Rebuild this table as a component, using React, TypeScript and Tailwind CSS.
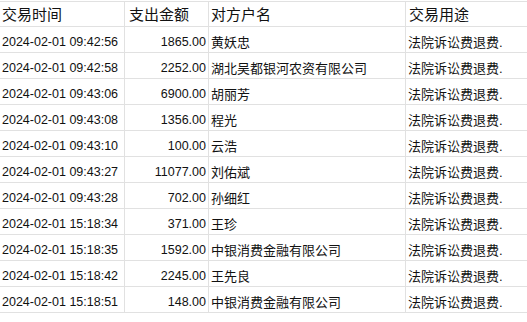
import React from "react";

const rows: [string, string, string][] = [
  ["2024-02-01 09:42:56", "1865.00", "黄妖忠"],
  ["2024-02-01 09:42:58", "2252.00", "湖北吴都银河农资有限公司"],
  ["2024-02-01 09:43:06", "6900.00", "胡丽芳"],
  ["2024-02-01 09:43:08", "1356.00", "程光"],
  ["2024-02-01 09:43:10", "100.00", "云浩"],
  ["2024-02-01 09:43:27", "11077.00", "刘佑斌"],
  ["2024-02-01 09:43:28", "702.00", "孙细红"],
  ["2024-02-01 15:18:34", "371.00", "王珍"],
  ["2024-02-01 15:18:35", "1592.00", "中银消费金融有限公司"],
  ["2024-02-01 15:18:42", "2245.00", "王先良"],
  ["2024-02-01 15:18:51", "148.00", "中银消费金融有限公司"],
];

const font = { fontFamily: '"Liberation Sans", "Noto Sans CJK SC", sans-serif' };

export default function App() {
  return (
    <div
      className="w-[527px] h-[322px] overflow-hidden bg-white text-[#111] pt-px"
      style={font}
    >
      <div className="border-t border-[#e1e1e1]">
        <div className="flex h-[25px] border-b border-[#e1e1e1] text-[15px] leading-[18px] items-end">
          <div className="w-[125px] h-full shrink-0 border-r border-[#e1e1e1] flex items-end pl-[2px] pb-[2px]">交易时间</div>
          <div className="w-[84px] h-full shrink-0 border-r border-[#e1e1e1] flex items-end pl-[4px] pb-[2px]">支出金额</div>
          <div className="w-[197px] h-full shrink-0 border-r border-[#e1e1e1] flex items-end pl-[2px] pb-[2px]">对方户名</div>
          <div className="flex-1 h-full flex items-end pl-[3px] pb-[2px]">交易用途</div>
        </div>
        {rows.map((r, i) => (
          <div key={i} className="flex h-[26px] border-b border-[#e1e1e1] text-[13px] leading-[15px] whitespace-nowrap">
            <div className="w-[125px] h-full shrink-0 border-r border-[#e1e1e1] flex items-end pl-[2px] pb-[2px] text-[12.5px]">{r[0]}</div>
            <div className="w-[84px] h-full shrink-0 border-r border-[#e1e1e1] flex items-end justify-end pr-[2px] pb-[2px] text-[12.5px]">{r[1]}</div>
            <div className="w-[197px] h-full shrink-0 border-r border-[#e1e1e1] flex items-end pl-[2px] pb-[2px]">{r[2]}</div>
            <div className="flex-1 h-full flex items-end pl-[2px] pb-[2px] overflow-visible">法院诉讼费退费.</div>
          </div>
        ))}
      </div>
    </div>
  );
}
